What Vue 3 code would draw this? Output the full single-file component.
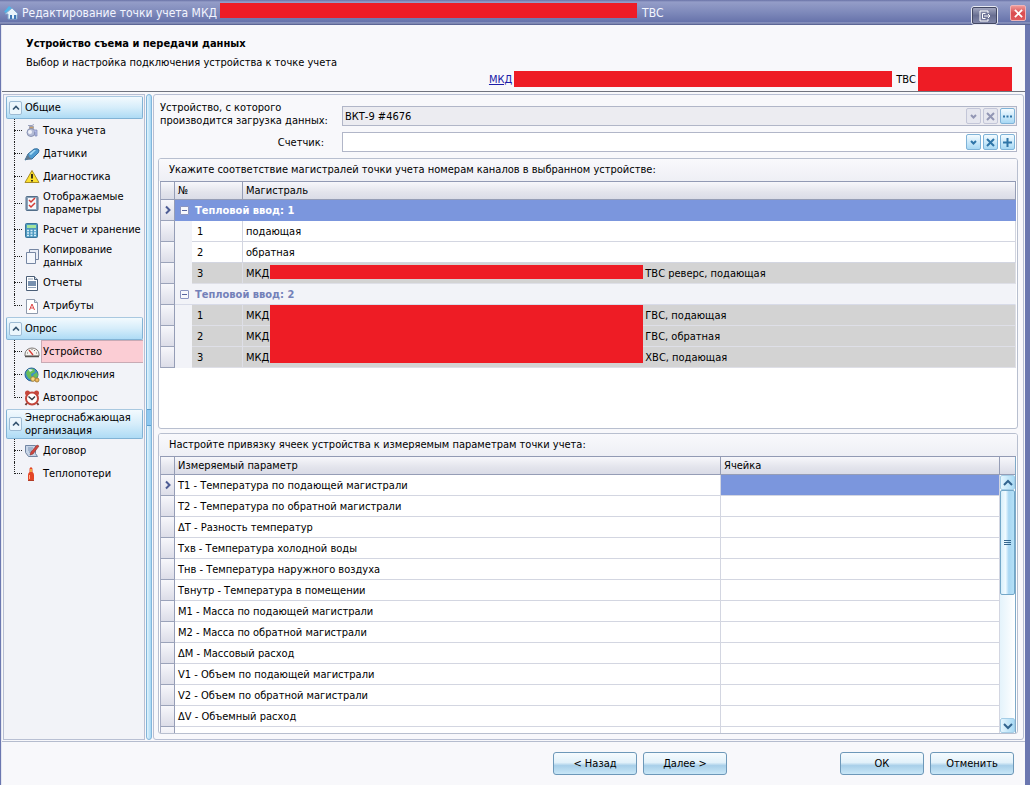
<script setup>
import { ref } from 'vue'

const device = ref('ВКТ-9 #4676')
const counter = ref('')

const sections = [
  {
    title: 'Общие',
    items: [
      { label: 'Точка учета', icon: 'point' },
      { label: 'Датчики', icon: 'sensor' },
      { label: 'Диагностика', icon: 'warning' },
      { label: 'Отображаемые параметры', icon: 'checks', tall: true },
      { label: 'Расчет и хранение', icon: 'calc' },
      { label: 'Копирование данных', icon: 'copy', tall: true },
      { label: 'Отчеты', icon: 'report' },
      { label: 'Атрибуты', icon: 'attrs' }
    ]
  },
  {
    title: 'Опрос',
    items: [
      { label: 'Устройство', icon: 'gauge', active: true },
      { label: 'Подключения', icon: 'globe' },
      { label: 'Автоопрос', icon: 'alarm' }
    ]
  },
  {
    title: 'Энергоснабжающая организация',
    tall: true,
    items: [
      { label: 'Договор', icon: 'contract' },
      { label: 'Теплопотери', icon: 'heat' }
    ]
  }
]

const inputs = [
  {
    title: 'Тепловой ввод: 1',
    current: true,
    rows: [
      { n: 1, name: 'подающая' },
      { n: 2, name: 'обратная' },
      { n: 3, name: 'МКД', tail: 'ТВС реверс, подающая', mask: 'single' }
    ]
  },
  {
    title: 'Тепловой ввод: 2',
    rows: [
      { n: 1, name: 'МКД', tail: 'ГВС, подающая', mask: 'triple' },
      { n: 2, name: 'МКД', tail: 'ГВС, обратная' },
      { n: 3, name: 'МКД', tail: 'ХВС, подающая' }
    ]
  }
]

const params = [
  'T1 - Температура по подающей магистрали',
  'T2 - Температура по обратной магистрали',
  'ΔT - Разность температур',
  'Tхв - Температура холодной воды',
  'Tнв - Температура наружного воздуха',
  'Tвнутр - Температура в помещении',
  'M1 - Масса по подающей магистрали',
  'M2 - Масса по обратной магистрали',
  'ΔM - Массовый расход',
  'V1 - Объем по подающей магистрали',
  'V2 - Объем по обратной магистрали',
  'ΔV - Объемный расход',
  'Mхв - Масса холодной воды'
]
</script>

<template>
  <div class="window">
    <header class="titlebar">
      <svg class="app-icon" viewBox="0 0 16 16">
        <path d="M1 7 6 1l4 3-4 5z" fill="#4fb4e8" />
        <path d="M2 9 9 3l6 6-1 1v4H5v-5z" fill="#e8f3fb" stroke="#7fa6cf" />
        <path d="M7 14v-4h2v4M11 14v-4h2v4" fill="#3f79b8" />
      </svg>
      <span class="title-text">Редактирование точки учета МКД</span>
      <span class="mask mask-title"></span>
      <span class="title-text">ТВС</span>
      <div class="title-buttons">
        <button class="detach" aria-label="Открепить">
          <svg viewBox="0 0 12 12"><path d="M9 3V1H1v10h8V9M3.500 3.500h3M3.500 3.500v5h3M5 6h6M9 4l2 2-2 2" fill="none" stroke="#fff" /></svg>
        </button>
        <button class="close" aria-label="Закрыть">
          <svg viewBox="0 0 10 10"><path d="m1 1 8 8M9 1 1 9" stroke="#fff" stroke-width="2" /></svg>
        </button>
      </div>
    </header>

    <div class="client">
      <section class="intro">
        <h1>Устройство съема и передачи данных</h1>
        <p>Выбор и настройка подключения устройства к точке учета</p>
        <div class="path">
          <a href="#">МКД</a><span class="mask mask-path"></span>
          <span class="path-text">ТВС</span><span class="mask mask-end"></span>
        </div>
      </section>

      <main class="body">
        <nav class="sidebar">
          <section v-for="s in sections" :key="s.title">
            <button class="nav-head" :class="{ tall: s.tall }">
              <span class="fold">
                <svg viewBox="0 0 8 8"><path d="m1 5.500 3-3 3 3" fill="none" stroke="#33536f" stroke-width="1.600" /></svg>
              </span>
              <span>{{ s.title }}</span>
            </button>
            <ul>
              <li v-for="i in s.items" :key="i.label" :class="{ tall: i.tall }">
                <span class="branch"></span>
                <svg class="nav-icon" viewBox="0 0 16 16">
                  <template v-if="i.icon === 'point'">
                    <circle cx="7" cy="9.500" r="4" fill="#b4bcd6" stroke="#8a93b3" />
                    <path d="M5.500 3.500h4v2h-4z" fill="#c9a06a" stroke="#8b8ea6" stroke-width=".7" />
                    <path d="M4 2.500h4l2-1" fill="none" stroke="#9aa1bd" />
                    <circle cx="6" cy="9" r="2" fill="#f1f3fa" />
                    <path d="M10 7h3v6h-2v-4h-1" fill="#b4bce6" stroke="#7c86b4" stroke-width=".7" />
                  </template>
                  <template v-else-if="i.icon === 'sensor'">
                    <path d="m1 14 3-6 6-5q4-1 5 1 0 3-2 4l-5 5-4 0z" fill="#4f9bd0" stroke="#376f9d" />
                    <path d="m5 8 5-4 2 0-5 5z" fill="#a9dbf5" />
                    <path d="m1 14 3-6 1 3 3 2z" fill="#61788e" />
                  </template>
                  <template v-else-if="i.icon === 'warning'">
                    <path d="M8 1.500 15 13.500H1z" fill="#fbe02e" stroke="#a98d28" stroke-linejoin="round" />
                    <path d="M8 5v4.500M8 11v1.500" stroke="#2a2514" stroke-width="1.800" />
                  </template>
                  <template v-else-if="i.icon === 'checks'">
                    <rect x="2" y="1.500" width="12" height="14" rx="1" fill="#8ba3bb" stroke="#526d88" />
                    <rect x="4" y="3" width="8" height="11" fill="#f5f8fc" />
                    <path d="m5 5 2 2 4-4M5 10l2 2 4-4" fill="none" stroke="#d33a34" stroke-width="1.500" />
                  </template>
                  <template v-else-if="i.icon === 'calc'">
                    <rect x="1.500" y="1.500" width="12" height="14" rx="1" fill="#4d99c0" stroke="#39759b" />
                    <path d="M3 3h9v3H3z" fill="#a4e59c" />
                    <path d="M3 8.500h9M3 11h9M3 13.500h9" stroke="#d7f0fa" stroke-width="1.500" stroke-dasharray="2 1.500" />
                  </template>
                  <template v-else-if="i.icon === 'copy'">
                    <path d="M5.500 1.500h9v10h-9z" fill="#e8edf7" stroke="#7586a3" />
                    <path d="M2.500 4.500h9v11h-9z" fill="#f3f6fc" stroke="#7586a3" />
                  </template>
                  <template v-else-if="i.icon === 'report'">
                    <path d="M2.500 1.500h8l3 3v11h-11z" fill="#fff" stroke="#4a5d76" />
                    <path d="M10.500 1.500v3h3" fill="#cdd9e6" stroke="#4a5d76" />
                    <path d="M4 4h5M4 12.500h8" stroke="#8fa0b6" />
                    <path d="M4 6h8v5H4z" fill="#7890ae" />
                  </template>
                  <template v-else-if="i.icon === 'attrs'">
                    <path d="M2.500 1.500h8l3 3v11h-11z" fill="#fff" stroke="#8f9aac" />
                    <path d="M10.500 1.500v3h3" fill="#e2e7ef" stroke="#8f9aac" />
                    <path d="m5.500 12 2.500-6 2.500 6M6.500 10h3" fill="none" stroke="#dd4545" />
                  </template>
                  <template v-else-if="i.icon === 'gauge'">
                    <path d="M1 12V10a7 6 0 0 1 14 0v2z" fill="#f5f3ef" stroke="#7d7875" />
                    <path d="M3 9h1M5 6l1 1M8 5v1M11 6l-1 1M13 9h-1" stroke="#7b7671" />
                    <path d="m5 6 4 5" stroke="#d83b35" stroke-width="1.300" />
                    <path d="M1 12.500h14" stroke="#56524f" stroke-width="1.500" />
                  </template>
                  <template v-else-if="i.icon === 'globe'">
                    <circle cx="7.500" cy="7.500" r="6.500" fill="#3c8fcb" stroke="#2c6594" />
                    <path d="M2 6q2-5 8-4l1 3-4 2 1 4-3 1-2-3zM9 8l4-3 1 4-3 3z" fill="#69bd58" />
                    <path d="M4 2q3 0 5 1L6 5z" fill="#d9f0ee" />
                    <circle cx="9" cy="12" r="2.300" fill="#f7d980" stroke="#a98238" />
                    <circle cx="13" cy="13" r="2" fill="#f1b95a" stroke="#a98238" />
                  </template>
                  <template v-else-if="i.icon === 'alarm'">
                    <circle cx="3.500" cy="3" r="2.500" fill="#c6483c" />
                    <circle cx="12.500" cy="3" r="2.500" fill="#c6483c" />
                    <path d="m3 13-1.500 2M13 13l1.500 2" stroke="#70433e" stroke-width="2" />
                    <circle cx="8" cy="8.500" r="6" fill="#fff" stroke="#c3463b" stroke-width="2" />
                    <path d="m4.500 6.500 3.500 3 3-3" fill="none" stroke="#343a42" stroke-width="1.400" />
                  </template>
                  <template v-else-if="i.icon === 'contract'">
                    <path d="M1.500 2.500h10v8l2 3h-9l-3-4z" fill="#c8d5e7" stroke="#7185a2" />
                    <path d="M4 5h5M4 7h4M5 9h3" stroke="#7d94b5" />
                    <path d="m6 12 1-3 6-7 2 1-6 8z" fill="#d1443c" stroke="#86332f" stroke-width=".6" />
                  </template>
                  <template v-else>
                    <path d="M5.500 4Q5 2 7 1q2 1 1.500 3v2Q10 7 10 9v4q0 2-3 2t-3-2V9q0-2 1.500-3z" fill="#e34526" />
                    <path d="M6 3h2v3H6z" fill="#f3a443" />
                    <path d="M5.500 9v4" stroke="#ffad8c" />
                    <path d="M4 14h6v1H4z" fill="#b23c26" />
                  </template>
                </svg>
                <a href="#" :class="{ active: i.active }">{{ i.label }}</a>
              </li>
            </ul>
          </section>
        </nav>

        <div class="splitter"><span></span></div>

        <div class="content">
          <form class="fields" @submit.prevent>
            <label for="device">Устройство, с которого<br />производится загрузка данных:</label>
            <div class="editor readonly">
              <input id="device" v-model="device" type="text" readonly />
              <button type="button" disabled aria-label="Список устройств"><svg viewBox="0 0 9 9"><path d="m2 3 2.500 2.500L7 3" /></svg></button>
              <button type="button" disabled aria-label="Очистить устройство"><svg viewBox="0 0 9 9"><path d="m1 1 7 7M8 1 1 8" /></svg></button>
              <button type="button" aria-label="Выбрать устройство"><svg viewBox="0 0 9 9"><path d="M0 4.500h2M3.500 4.500h2M7 4.500h2" /></svg></button>
            </div>
            <label class="right" for="counter">Счетчик:</label>
            <div class="editor">
              <input id="counter" v-model="counter" type="text" />
              <button type="button" aria-label="Список счетчиков"><svg viewBox="0 0 9 9"><path d="m2 3 2.500 2.500L7 3" /></svg></button>
              <button type="button" aria-label="Очистить счетчик"><svg viewBox="0 0 9 9"><path d="m1 1 7 7M8 1 1 8" /></svg></button>
              <button type="button" aria-label="Добавить счетчик"><svg viewBox="0 0 9 9"><path d="M4.500 0v9M0 4.500h9" /></svg></button>
            </div>
          </form>

          <section class="group channels">
            <h2>Укажите соответствие магистралей точки учета номерам каналов в выбранном устройстве:</h2>
            <div class="grid-wrap">
              <table>
                <colgroup><col class="c-mark" /><col class="c-indent" /><col class="c-num" /><col /></colgroup>
                <thead>
                  <tr><th class="mark"></th><th colspan="2">№</th><th>Магистраль</th></tr>
                </thead>
                <tbody v-for="g in inputs" :key="g.title">
                  <tr class="branch-row" :class="{ current: g.current }">
                    <td class="mark"><svg v-if="g.current" viewBox="0 0 8 10"><path d="m2 1.500 3.500 3.500L2 8.500" /></svg></td>
                    <td colspan="3">
                      <div class="branch-cell">
                        <button :aria-label="g.title"></button>
                        <span>{{ g.title }}</span>
                      </div>
                    </td>
                  </tr>
                  <tr v-for="r in g.rows" :key="r.n" :class="{ grey: r.tail }">
                    <td class="mark"></td>
                    <td class="indent"></td>
                    <td>{{ r.n }}</td>
                    <td>
                      <div class="name-cell">
                        <span>{{ r.name }}</span>
                        <span v-if="r.tail" class="gap"><span v-if="r.mask" class="mask" :class="r.mask"></span></span>
                        <span v-if="r.tail">{{ r.tail }}</span>
                      </div>
                    </td>
                  </tr>
                </tbody>
              </table>
            </div>
          </section>

          <section class="group cells">
            <h2>Настройте привязку ячеек устройства к измеряемым параметрам точки учета:</h2>
            <div class="grid-wrap with-scroll">
              <div class="table-clip">
                <table>
                  <colgroup><col class="c-mark" /><col class="c-param" /><col /></colgroup>
                  <thead>
                    <tr><th class="mark"></th><th>Измеряемый параметр</th><th>Ячейка</th></tr>
                  </thead>
                  <tbody>
                    <tr v-for="(p, k) in params" :key="p">
                      <td class="mark"><svg v-if="k === 0" viewBox="0 0 8 10"><path d="m2 1.500 3.500 3.500L2 8.500" /></svg></td>
                      <td>{{ p }}</td>
                      <td :class="{ picked: k === 0 }"></td>
                    </tr>
                  </tbody>
                </table>
              </div>
              <div class="scroll">
                <div class="corner"></div>
                <button aria-label="Вверх"><svg viewBox="0 0 10 8"><path d="m1 6 4-4 4 4" /></svg></button>
                <div class="track"><div class="thumb"><i></i></div></div>
                <button aria-label="Вниз"><svg viewBox="0 0 10 8"><path d="m1 2 4 4 4-4" /></svg></button>
              </div>
            </div>
          </section>
        </div>
      </main>

      <footer class="actions">
        <button>&lt; Назад</button>
        <button>Далее &gt;</button>
        <button class="ok">ОК</button>
        <button>Отменить</button>
      </footer>
    </div>
  </div>
</template>

<style>
body { margin: 0; background: #f8f8fb; }
</style>

<style scoped>
* { box-sizing: border-box; }
.window {
  height: 100vh; display: flex; flex-direction: column; overflow: hidden;
  background: #6b77b0; color: #000;
  font: 11px/13px "DejaVu Sans Condensed", Tahoma, "DejaVu Sans", sans-serif;
}
button, input { font: inherit; color: inherit; padding: 0; margin: 0; }
svg { display: block; }
.mask { background: #ee1c25; display: block; flex: none; }

.titlebar {
  flex: none; height: 25px; display: flex; align-items: center; padding: 0 4px 0 3px;
  background: linear-gradient(#6972a6 0, #949dc8 2px, #7f8abb 12px, #6773ab 22px, #a0a8cc 23px, #5c6696 24px);
  color: #f3f5ff; font-size: 12px; line-height: 16px;
}
.app-icon { width: 16px; height: 16px; margin-right: 3px; }
.title-text { white-space: nowrap; }
.mask-title { width: 417px; height: 15px; margin: 0 5px 4px 3px; }
.title-buttons { margin-left: auto; display: flex; align-items: flex-start; align-self: stretch; gap: 12px; padding-top: 5px; }
.detach {
  width: 27px; height: 19px; margin-top: 1px; display: grid; place-items: center;
  border: 1px solid #e7e9f3; border-radius: 3px; outline: 1px solid #434863; outline-offset: -2px;
  background: linear-gradient(#a9adc5, #686e91 50%, #8389aa);
}
.detach svg { width: 12px; height: 12px; }
.close {
  width: 16px; height: 16px; display: grid; place-items: center;
  border: 1px solid #f0b4b8; border-radius: 2px; background: linear-gradient(#f09a98, #d94c50 50%, #e0595c);
}
.close svg { width: 9px; height: 9px; }

.client { flex: 1; min-height: 0; margin: 0 5px 0 1px; display: flex; flex-direction: column; background: #f8f8fb; border-left: 1px solid #e5e7f0; }
.intro { flex: none; height: 67px; padding: 12px 13px 0 24px; border-bottom: 1px solid #70747f; }
h1 { margin: 0; font-size: 11px; line-height: 13px; font-weight: bold; }
.intro p { margin: 6px 0 0; }
.path { display: flex; justify-content: flex-end; align-items: center; height: 24px; margin-top: -2px; }
.path a { color: #1c1ca8; text-decoration: underline; margin-right: 2px; }
.mask-path { width: 378px; height: 16px; }
.path-text { margin: 0 2px 0 4px; }
.mask-end { width: 94px; height: 24px; }

.body { flex: 1; min-height: 0; display: flex; padding: 2px 1px 1px 1px; border-bottom: 1px solid #b5bcce; }
.sidebar { flex: none; width: 142px; padding: 1px 1px 1px 2px; background: #f2f3f8; border: 1px solid #b8bfd3; }
.nav-head {
  width: 100%; height: 23px; display: flex; align-items: center; gap: 3px; padding: 0 2px; text-align: left;
  border: 1px solid #82b3d5; border-top-color: #a9c8e0; border-radius: 2px;
  background: linear-gradient(#f3fafe, #d6edfa 50%, #aedbf5);
}
.nav-head.tall { height: 30px; }
.fold { flex: none; width: 13px; height: 14px; display: grid; place-items: center; border: 1px solid #9dbbd4; border-radius: 2px; background: #ecf6fc; }
.fold svg { width: 8px; height: 8px; }
ul { list-style: none; margin: 0; padding: 0 0 0 8px; }
li { height: 23px; display: flex; align-items: center; position: relative; }
li.tall { height: 30px; }
.branch { flex: none; width: 8px; margin-right: 2px; border-top: 1px dotted #222; }
li::before { content: ""; position: absolute; left: 0; top: 0; bottom: 0; border-left: 1px dotted #222; }
li:last-child::before { bottom: 50%; }
.nav-icon { flex: none; width: 16px; height: 16px; margin-right: 1px; }
li a {
  flex: 1; min-width: 0; height: 100%; display: flex; align-items: center; padding-left: 1px;
  border: 1px solid transparent; border-width: 1px 0 1px 1px; color: #000; text-decoration: none;
}
li a.active { background: #fbcdd4; border-color: #c8aab4; }
.splitter { flex: none; width: 6px; margin: 0 1px; display: flex; align-items: center; border: 1px solid #82b5da; border-radius: 3px; background: linear-gradient(90deg, #e3f4fd, #a6d7f4); }
.splitter span { width: 100%; height: 17px; background: #8ec8f0; border: solid #5e9fd0; border-width: 1px 0; }

.content {
  flex: 1; min-width: 0; display: flex; flex-direction: column; padding: 6px 5px 5px 4px;
  border: 1px solid #b8bfd3; border-radius: 3px; background: #f8f8fb;
}
.fields { flex: none; display: grid; grid-template-columns: 164px 1fr; gap: 5px 18px; align-items: center; padding: 0 1px 6px 2px; }
.fields label { white-space: nowrap; }
.fields .right { text-align: right; }
.editor { height: 20px; display: flex; align-items: center; gap: 2px; padding: 1px; margin-top: 4px; border: 1px solid #b1b6c8; background: #fff; }
.right + .editor { margin-top: 0; }
.editor.readonly { background: #ececf1; }
.editor input { flex: 1; min-width: 0; height: 16px; padding: 0 1px; border: 0; outline: 0; background: transparent; }
.editor button { flex: none; width: 15px; height: 16px; display: grid; place-items: center; border: 1px solid #7fb3d8; border-radius: 2px; background: linear-gradient(#f4fbff, #cdeafa 50%, #a8d8f4); }
.editor button:disabled { border-color: #c3c6d8; background: #e6e7ef; }
.editor svg { width: 9px; height: 9px; fill: none; stroke: #2f75a8; stroke-width: 2; }
.editor button:disabled svg { stroke: #9296b4; }

.group { display: flex; flex-direction: column; border: 1px solid #b8bfcf; border-radius: 3px; background: #fff; overflow: hidden; }
.channels { flex: none; min-height: 271px; }
.cells { flex: 1; min-height: 0; margin-top: 4px; }
h2 { flex: none; margin: 0; padding: 4px 10px 5px; height: 22px; font-size: 11px; line-height: 13px; font-weight: normal; background: linear-gradient(#f9f9fc, #eeeff5); white-space: nowrap; }
.grid-wrap { margin: 0 1px; border-top: 1px solid #929ab4; }
.with-scroll { flex: 1; min-height: 0; display: flex; }
.table-clip { flex: 1; min-width: 0; overflow: hidden; }
table { width: 100%; table-layout: fixed; border-collapse: separate; border-spacing: 0; }
.c-mark { width: 15px; }
.c-indent { width: 17px; }
.c-num { width: 51px; }
.c-param { width: 65%; }
th { height: 18px; padding: 0 3px; text-align: left; font-weight: normal; background: linear-gradient(#f7f7fb, #e3e4ec 60%, #dadce7); border-right: 1px solid #959db6; border-bottom: 1px solid #959db6; }
td { height: 21px; padding: 0 3px; border-right: 1px solid #d3d6e1; border-bottom: 1px solid #d3d6e1; white-space: nowrap; }
.mark { padding: 0; border-left: 1px solid #a5abc2; border-right-color: #959db6; }
td.mark { background: linear-gradient(#f7f7fb, #dcdde8); border-bottom-color: #9ba3ba; }
.mark svg { width: 8px; height: 10px; margin: 0 auto; fill: none; stroke: #4d5c94; stroke-width: 2; }
.indent, .branch-row td:last-child { background: #f2f3f8; border-color: #f2f3f8; }
.branch-row td:last-child { color: #7481b9; font-weight: bold; border-bottom-color: #d8dbe8; }
.branch-row.current td:last-child { background: #7b96dd; border-color: #7b96dd; color: #fff; }
.indent + td { padding-left: 5px; }
.grey td:nth-child(n + 3) { background: #d3d3d3; border-color: #dedfe7; }
.branch-cell { display: flex; align-items: center; gap: 6px; padding-left: 2px; }
.branch-cell button { width: 9px; height: 9px; border: 1px solid #8a94c0; border-radius: 1px; background: linear-gradient(#56649e, #56649e) center / 5px 1px no-repeat #f7f8fc; }
.name-cell { display: flex; align-items: center; }
.gap { flex: none; width: 376px; height: 13px; position: relative; }
.gap .mask { position: absolute; left: 1px; width: 373px; }
.gap .single { top: -2px; height: 14px; }
.gap .triple { top: -4px; height: 58px; }
td.picked { background: #7b96dd; }

.scroll { flex: none; width: 16px; display: flex; flex-direction: column; border-right: 1px solid #7fa9c8; }
.corner { flex: none; height: 18px; border-bottom: 1px solid #959db6; background: linear-gradient(#f7f7fb, #dadce7); }
.scroll button { flex: none; height: 15px; display: grid; place-items: center; border: 1px solid #a5cde6; border-radius: 2px; background: linear-gradient(90deg, #e5f6fe, #a9daf5); }
.scroll svg { width: 10px; height: 8px; fill: none; stroke: #32648f; stroke-width: 2; }
.track { flex: 1; background: linear-gradient(90deg, #e4f3fb, #fff); }
.thumb { height: 46%; display: grid; place-items: center; border: 1px solid #73a7c8; border-radius: 2px; background: linear-gradient(90deg, #d7effb, #f0faff 35%, #a9d7f3 60%, #b4e0f7); }
.thumb i { width: 7px; height: 5px; border: solid #35668e; border-width: 1px 0; background: linear-gradient(#35668e, #35668e) center / 7px 1px no-repeat; }

.actions { flex: none; height: 43px; display: flex; gap: 6px; padding: 10px 11px 0; justify-content: flex-end; }
.actions button { width: 84px; height: 23px; border: 1px solid #6d98b9; border-radius: 3px; background: linear-gradient(#f6fbfe, #e2f1fa 45%, #a8cfe9 60%, #c9e7f7); }
.actions .ok { margin-left: 107px; }
</style>
